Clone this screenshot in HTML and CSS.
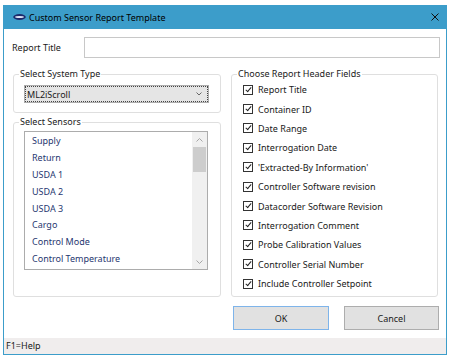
FILE: index.html
```html
<!DOCTYPE html>
<html lang="en">

<head>
    <meta charset="UTF-8">
    <title>Custom Sensor Report Template</title>
    <link rel="stylesheet" href="styles.css">
</head>

<body>

    <div class="window">
        <div class="titlebar">
            <svg class="app-icon" width="13" height="6" viewBox="0 0 13 6">
                <ellipse cx="6.5" cy="3" rx="6.3" ry="2.9" fill="#1c2a6b" />
                <ellipse cx="6.5" cy="3" rx="4.4" ry="1.1" fill="#dfe5f6" />
            </svg>
            <span class="title">Custom Sensor Report Template</span>
            <svg class="close" width="8" height="8" viewBox="0 0 8 8">
                <path d="M0.5 0.5 L7.5 7.5 M7.5 0.5 L0.5 7.5" stroke="#111" stroke-width="1" />
            </svg>
        </div>

        <div class="content">
            <div class="title-row">
                <label class="label">Report Title</label>
                <input type="text" class="textbox">
            </div>

            <div class="groups">
                <div class="left-col">
                    <fieldset class="group system-group">
                        <legend>Select System Type</legend>
                        <div class="combo">
                            <span>ML2iScroll</span>
                            <svg width="6" height="4" viewBox="0 0 6 4">
                                <path d="M0.5 0.5 L3 3 L5.5 0.5" fill="none" stroke="#666" stroke-width="1" />
                            </svg>
                        </div>
                    </fieldset>

                    <fieldset class="group sensors-group">
                        <legend>Select Sensors</legend>
                        <div class="listbox">
                            <ul class="items">
                                <li>Supply</li>
                                <li>Return</li>
                                <li>USDA 1</li>
                                <li>USDA 2</li>
                                <li>USDA 3</li>
                                <li>Cargo</li>
                                <li>Control Mode</li>
                                <li>Control Temperature</li>
                            </ul>
                            <div class="scrollbar">
                                <div class="arrow">
                                    <svg width="7" height="4" viewBox="0 0 7 4">
                                        <path d="M0.5 3.5 L3.5 0.5 L6.5 3.5" fill="none" stroke="#a6a6a6" stroke-width="1" />
                                    </svg>
                                </div>
                                <div class="track">
                                    <div class="thumb"></div>
                                </div>
                                <div class="arrow">
                                    <svg width="7" height="4" viewBox="0 0 7 4">
                                        <path d="M0.5 0.5 L3.5 3.5 L6.5 0.5" fill="none" stroke="#a6a6a6" stroke-width="1" />
                                    </svg>
                                </div>
                            </div>
                        </div>
                    </fieldset>
                </div>

                <fieldset class="group fields-group">
                    <legend>Choose Report Header Fields</legend>
                    <div class="checks">
                        <label class="check"><span class="box"></span>Report Title</label>
                        <label class="check"><span class="box"></span>Container ID</label>
                        <label class="check"><span class="box"></span>Date Range</label>
                        <label class="check"><span class="box"></span>Interrogation Date</label>
                        <label class="check"><span class="box"></span>'Extracted-By Information'</label>
                        <label class="check"><span class="box"></span>Controller Software revision</label>
                        <label class="check"><span class="box"></span>Datacorder Software Revision</label>
                        <label class="check"><span class="box"></span>Interrogation Comment</label>
                        <label class="check"><span class="box"></span>Probe Calibration Values</label>
                        <label class="check"><span class="box"></span>Controller Serial Number</label>
                        <label class="check"><span class="box"></span>Include Controller Setpoint</label>
                    </div>
                </fieldset>
            </div>

            <div class="actions">
                <button class="button default">OK</button>
                <button class="button">Cancel</button>
            </div>
        </div>

        <div class="statusbar">F1=Help</div>
    </div>

</body>

</html>
```

FILE: styles.css
```css
body {
    margin: 0;
    background-color: #fff;
    font-family: "Noto Sans", sans-serif;
    font-size: 9px;
    color: #1a1a1a;
}

.window {
    margin: 5px 0 0 3px;
    width: 444px;
    height: 350px;
    border: 1px solid #3c9dca;
    border-top: none;
    display: flex;
    flex-direction: column;
    box-sizing: border-box;
}

.titlebar {
    height: 24px;
    background-color: #3c9dca;
    display: flex;
    align-items: center;
    padding: 0 8px 0 10px;
    margin: 0 -1px 0 -1px;
}

.app-icon {
    margin-right: 3px;
}

.title {
    flex: 1;
    font-size: 9px;
    color: #000;
}

.content {
    flex: 1;
    padding: 8px 6px 0 8px;
}

.title-row {
    display: flex;
    align-items: center;
}

.label {
    width: 72px;
}

.textbox {
    flex: 1;
    height: 21px;
    box-sizing: border-box;
    border: 1px solid #c8c8c8;
    outline: none;
    margin: 0;
}

.groups {
    display: flex;
    gap: 10px;
    margin-top: 10px;
    padding-left: 1px;
}

.left-col {
    width: 208px;
    display: flex;
    flex-direction: column;
    gap: 3px;
}

.group {
    margin: 0;
    border: 1px solid #dfdfdf;
    border-radius: 3px;
    padding: 0;
    box-sizing: border-box;
    min-width: 0;
}

.group legend {
    padding: 0 1px;
    margin-left: 5px;
    line-height: 12px;
}

.system-group {
    height: 45px;
}

.combo {
    margin: 6px 12px 0 11px;
    height: 16px;
    box-sizing: border-box;
    border: 1px dotted #444;
    outline: 1px solid #adadad;
    background-color: #e5e5e5;
    display: flex;
    align-items: center;
    justify-content: space-between;
    padding: 0 5px 0 1px;
}

.sensors-group {
    height: 181px;
}

.listbox {
    margin: 3px 12px 0 10px;
    height: 139px;
    box-sizing: border-box;
    border: 1px solid #acacac;
    display: flex;
}

.items {
    flex: 1;
    list-style: none;
    margin: 0;
    padding: 1px 0 0 7px;
    color: #1f3770;
}

.items li {
    height: 16.9px;
    line-height: 16.9px;
}

.scrollbar {
    width: 15px;
    background-color: #f0f0f0;
    display: flex;
    flex-direction: column;
}

.scrollbar .arrow {
    height: 15px;
    display: flex;
    align-items: center;
    justify-content: center;
}

.track {
    flex: 1;
}

.thumb {
    height: 25px;
    background-color: #cdcdcd;
    margin: 0 1px;
}

.fields-group {
    width: 207px;
    height: 229px;
}

.checks {
    padding-left: 11px;
}

.check {
    display: flex;
    align-items: center;
    height: 19.4px;
}

.box {
    width: 10px;
    height: 10px;
    box-sizing: border-box;
    border: 1px solid #333;
    margin-right: 5px;
    position: relative;
}

.box::after {
    content: "";
    position: absolute;
    left: 2.5px;
    top: 0;
    width: 2px;
    height: 5px;
    border: solid #222;
    border-width: 0 1.6px 1.6px 0;
    transform: rotate(40deg);
}

.actions {
    display: flex;
    justify-content: flex-end;
    gap: 15px;
    margin-top: 9px;
    padding-right: 1px;
}

.button {
    width: 95px;
    height: 24px;
    font-family: inherit;
    font-size: 9px;
    color: #1a1a1a;
    background-color: #e1e1e1;
    border: 1px solid #adadad;
    padding: 0;
}

.button.default {
    width: 96px;
    border-color: #7eb4ea;
}

.statusbar {
    height: 16px;
    background-color: #f0eded;
    padding-left: 2px;
    line-height: 16px;
}
```
